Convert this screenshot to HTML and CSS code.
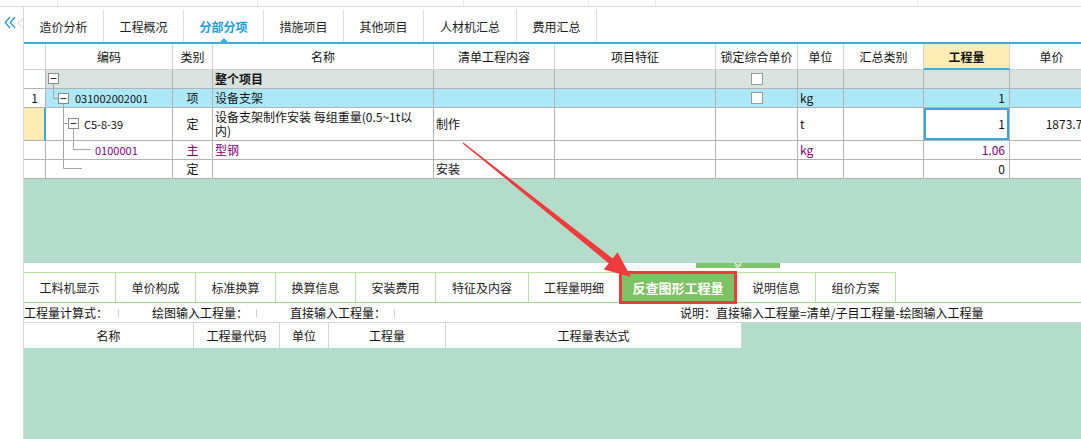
FILE: index.html
```html
<!DOCTYPE html>
<html lang="zh-CN">
<head>
<meta charset="utf-8">
<title>分部分项</title>
<link rel="stylesheet" href="styles.css">
</head>
<body>
<div class="page">
  <div class="topstrip">
    <span class="tk t1"></span><span class="tk t2"></span><span class="tk t3"></span><span class="tk t4"></span><span class="tk t5"></span><span class="tk t6"></span>
  </div>
  <div class="body">
    <aside class="side">
      <svg class="collapse" width="12" height="13" viewBox="0 0 12 13"><path d="M6 1 L1.2 6.5 L6 12 M11 1 L6.2 6.5 L11 12" fill="none" stroke="#2a9ad6" stroke-width="1.3"/></svg>
      <svg class="notch" width="6" height="10" viewBox="0 0 6 10"><path d="M6 0.5 L1 5 L6 9.5" fill="none" stroke="#cfcfcf" stroke-width="1"/></svg>
    </aside>
    <main class="main">
      <nav class="tabs">
        <div class="tab">造价分析</div>
        <div class="tab">工程概况</div>
        <div class="tab on">分部分项</div>
        <div class="tab">措施项目</div>
        <div class="tab">其他项目</div>
        <div class="tab w93">人材机汇总</div>
        <div class="tab">费用汇总</div>
      </nav>

      <div class="grid">
        <div class="r hd">
          <div class="c"></div>
          <div class="c">编码</div>
          <div class="c">类别</div>
          <div class="c">名称</div>
          <div class="c">清单工程内容</div>
          <div class="c">项目特征</div>
          <div class="c">锁定综合单价</div>
          <div class="c">单位</div>
          <div class="c">汇总类别</div>
          <div class="c q">工程量</div>
          <div class="c">单价</div>
        </div>

        <div class="r r1">
          <div class="c num"></div>
          <div class="c tree">
            <svg width="126" height="18" viewBox="0 0 126 18"><g fill="none" stroke="#a6a6a6"><path d="M7.5 13.5 V18"/></g><rect x="2.5" y="3.5" width="10" height="10" fill="#fff" stroke="#8c8c8c"/><path d="M4.5 8.5 H10.5" stroke="#333"/></svg>
          </div>
          <div class="c"></div>
          <div class="c pl b">整个项目</div>
          <div class="c"></div>
          <div class="c"></div>
          <div class="c ctr"><span class="chk"></span></div>
          <div class="c"></div>
          <div class="c"></div>
          <div class="c"></div>
          <div class="c"></div>
        </div>

        <div class="r r2">
          <div class="c num">1</div>
          <div class="c tree">
            <svg width="126" height="18" viewBox="0 0 126 18"><g fill="none" stroke="#a6a6a6"><path d="M7.5 0 V9.5 H12.5 M17.5 14.5 V18"/></g><rect x="12.5" y="4.5" width="10" height="10" fill="#fff" stroke="#8c8c8c"/><path d="M14.5 9.5 H20.5" stroke="#333"/></svg>
            <span class="code l1">031002002001</span>
          </div>
          <div class="c ctr">项</div>
          <div class="c pl">设备支架</div>
          <div class="c"></div>
          <div class="c"></div>
          <div class="c ctr"><span class="chk"></span></div>
          <div class="c unit">kg</div>
          <div class="c"></div>
          <div class="c rt">1</div>
          <div class="c"></div>
        </div>

        <div class="r r3">
          <div class="c num"></div>
          <div class="c tree">
            <svg width="126" height="32" viewBox="0 0 126 32"><g fill="none" stroke="#a6a6a6"><path d="M17.5 0 V32 M17.5 15.5 H22.5 M27.5 20.5 V32"/></g><rect x="22.5" y="10.5" width="10" height="10" fill="#fff" stroke="#8c8c8c"/><path d="M24.5 15.5 H30.5" stroke="#333"/></svg>
            <span class="code l2">C5-8-39</span>
          </div>
          <div class="c ctr">定</div>
          <div class="c pl wrap"><span class="two">设备支架制作安装 每组重量(0.5~1t以<br>内)</span></div>
          <div class="c pl">制作</div>
          <div class="c"></div>
          <div class="c"></div>
          <div class="c unit">t</div>
          <div class="c"></div>
          <div class="c rt sel">1</div>
          <div class="c rt">1873.75</div>
        </div>

        <div class="r r4">
          <div class="c num"></div>
          <div class="c tree">
            <svg width="126" height="18" viewBox="0 0 126 18"><g fill="none" stroke="#a6a6a6"><path d="M17.5 0 V18 M27.5 0 V8.5 H45"/></g></svg>
            <span class="code l3 pur">0100001</span>
          </div>
          <div class="c ctr pur">主</div>
          <div class="c pl pur">型钢</div>
          <div class="c"></div>
          <div class="c"></div>
          <div class="c"></div>
          <div class="c unit pur">kg</div>
          <div class="c"></div>
          <div class="c rt pur">1.06</div>
          <div class="c"></div>
        </div>

        <div class="r r5">
          <div class="c num"></div>
          <div class="c tree">
            <svg width="126" height="18" viewBox="0 0 126 18"><g fill="none" stroke="#a6a6a6"><path d="M17.5 0 V8.5 H36"/></g></svg>
          </div>
          <div class="c ctr">定</div>
          <div class="c"></div>
          <div class="c pl">安装</div>
          <div class="c"></div>
          <div class="c"></div>
          <div class="c"></div>
          <div class="c"></div>
          <div class="c rt">0</div>
          <div class="c"></div>
        </div>
      </div>

      <div class="pane"></div>

      <div class="split">
        <span class="handle"><svg width="8" height="5" viewBox="0 0 8 5"><path d="M0.5 0 L4 2.5 L7.5 0 M0.5 2 L4 4.5 L7.5 2" fill="none" stroke="#fff" stroke-width="1"/></svg></span>
      </div>

      <nav class="btabs">
        <div class="bt w92">工料机显示</div>
        <div class="bt">单价构成</div>
        <div class="bt">标准换算</div>
        <div class="bt">换算信息</div>
        <div class="bt">安装费用</div>
        <div class="bt w93">特征及内容</div>
        <div class="bt w90">工程量明细</div>
        <div class="bt on">反查图形工程量</div>
        <div class="bt w79">说明信息</div>
        <div class="bt">组价方案</div>
      </nav>

      <div class="info">
        <span class="lbl">工程量计算式：</span><span class="fld f1"></span>
        <span class="lbl">绘图输入工程量：</span><span class="fld f2"></span>
        <span class="lbl">直接输入工程量：</span><span class="fld f3"></span>
        <span class="lbl">说明：直接输入工程量=清单/子目工程量-绘图输入工程量</span>
      </div>

      <div class="bgrid">
        <div class="bhd">
          <div class="bh w170">名称</div>
          <div class="bh w86">工程量代码</div>
          <div class="bh w49">单位</div>
          <div class="bh w117">工程量</div>
          <div class="bh w296">工程量表达式</div>
        </div>
      </div>
    </main>
  </div>

  <svg class="arrow" width="1081" height="439" viewBox="0 0 1081 439">
    <polygon points="463.4,142.5 612.6,258.4 617.5,252.2 631,277 603.8,269.4 608.7,263.2 462.6,143.5" fill="#ef3b3b"/>
  </svg>
</div>
</body>
</html>
```

FILE: styles.css
```css
* { box-sizing: border-box; }
html, body { margin: 0; padding: 0; }
body { width: 1081px; height: 439px; overflow: hidden; background: #fff; }

.page {
  position: relative;
  width: 1081px;
  height: 439px;
  overflow: hidden;
  font-family: "Noto Sans CJK SC", "Noto Sans", sans-serif;
  font-size: 12px;
  color: #141414;
  background: #fff;
}

/* faint strip at very top */
.topstrip { display: flex; height: 7px; border-bottom: 1px solid #dedede; }
.tk { flex: none; height: 6px; border-right: 1px solid #e8e8e8; }
.t1 { width: 58px; } .t2 { width: 200px; } .t3 { width: 206px; }
.t4 { width: 125px; } .t5 { width: 67px; } .t6 { width: 262px; }

.body { display: flex; height: 432px; }

.side { flex: none; width: 23px; display: flex; align-items: flex-start; }
.collapse { flex: none; margin: 9px 0 0 4px; }
.notch { flex: none; margin: 11px 0 0 auto; }

.main {
  flex: 1;
  min-width: 0;
  border-left: 1px solid #d6d6d6;
  display: flex;
  flex-direction: column;
  overflow: hidden;
}

/* top tabs */
.tabs {
  flex: none;
  display: flex;
  height: 37px;
  padding-top: 3px;
  border-bottom: 2px solid #3eaddd;
}
.tab {
  flex: none;
  width: 80px;
  display: flex;
  align-items: center;
  justify-content: center;
  border-right: 1px solid #dcdcdc;
  color: #1e1e1e;
  position: relative;
  padding-top: 1px;
}
.tab.w93 { width: 93px; }
.tab.on { color: #1b9de0; font-weight: bold; }
.tab.on::after {
  content: "";
  position: absolute;
  left: 50%;
  bottom: 0;
  margin-left: -4px;
  border-left: 4px solid transparent;
  border-right: 4px solid transparent;
  border-bottom: 4px solid #3eaddd;
}

/* main grid */
.grid { flex: none; width: 1070px; }
.r {
  display: grid;
  grid-template-columns: 22px 127px 40px 221px 121px 161px 82px 46px 80px 86px 84px;
  height: 19px;
}
.c {
  min-width: 0;
  display: flex;
  align-items: center;
  white-space: nowrap;
  overflow: hidden;
  line-height: 14px;
  border-right: 1px solid #b3b3b3;
  border-bottom: 1px solid #b3b3b3;
}
.hd { height: 26px; }
.hd .c { border-color: #d2d2d2; justify-content: center; padding-top: 1px; }
.hd .q { background: #feedb5; font-weight: bold; border-bottom: 2px solid #3eaddd; }
.r1 { background: #d9e2de; }
.r2 { background: #ade8f8; }
.r3 { height: 33px; }
.num { background: #fff; justify-content: center; }
.r3 .num { background: #feecb4; border-right: 2px solid #3aa6d8; }

.tree { display: grid; grid-template: 1fr / 1fr; align-items: center; }
.tree svg { grid-area: 1 / 1; align-self: start; }
.tree .code { grid-area: 1 / 1; font-size: 11px; }
.l1 { padding-left: 29px; }
.l2 { padding-left: 38px; }
.l3 { padding-left: 49px; }

.ctr { justify-content: center; }
.pl { padding-left: 2px; }
.wrap { white-space: normal; }
.two { display: block; line-height: 14px; }
.unit { padding-left: 2px; }
.rt { justify-content: flex-end; padding-right: 4px; }
.pur { color: #800080; }
.b { font-weight: bold; }
.sel { box-shadow: inset 0 0 0 2px #3ba7d9; }
.chk { width: 12px; height: 12px; border: 1px solid #9a9a9a; background: #fff; }

/* green empty pane */
.pane { flex: none; height: 84px; background: #b4dccb; }

.split { flex: none; height: 9px; display: flex; }
.handle {
  flex: none;
  margin-left: 672px;
  width: 84px;
  height: 5px;
  background: #7fc36a;
  display: flex;
  justify-content: center;
}

/* bottom tabs */
.btabs {
  flex: none;
  height: 31px;
  display: flex;
  border-bottom: 1px solid #a8d991;
}
.bt {
  flex: none;
  width: 80px;
  display: flex;
  align-items: center;
  justify-content: center;
  border-top: 1px solid #b8e3a4;
  border-right: 1px solid #b8e3a4;
  color: #1e1e1e;
}
.bt.w92 { width: 92px; }
.bt.w93 { width: 93px; }
.bt.w90 { width: 90px; border-right: 0; }
.bt.w79 { width: 79px; }
.bt.on {
  width: 118px;
  height: 33px;
  margin-top: -1px;
  align-self: flex-start;
  border: 3px solid #ee3b3b;
  background: #7dc265;
  color: #fff;
  font-weight: bold;
  font-size: 13px;
  position: relative;
  z-index: 1;
}

/* info line */
.info {
  flex: none;
  height: 19px;
  display: flex;
  align-items: center;
  white-space: nowrap;
  color: #111;
}
.lbl { flex: none; }
.fld { flex: none; height: 8px; border-left: 1px solid #cfcfcf; }
.f1 { margin-left: 10px; width: 34px; }
.f2 { margin-left: 8px; width: 34px; }
.f3 { margin-left: 8px; width: 286px; }

/* bottom grid */
.bgrid { flex: 1; background: #b4dccb; border-top: 1px solid #d4d4d4; }
.bhd { display: flex; height: 25px; }
.bh {
  flex: none;
  background: #fff;
  border-right: 1px solid #d4d4d4;
  display: flex;
  align-items: center;
  justify-content: center;
}
.w170 { width: 170px; } .w86 { width: 86px; } .w49 { width: 49px; }
.w117 { width: 117px; } .w296 { width: 296px; }

.arrow { position: absolute; left: 0; top: 0; pointer-events: none; z-index: 5; }
```
